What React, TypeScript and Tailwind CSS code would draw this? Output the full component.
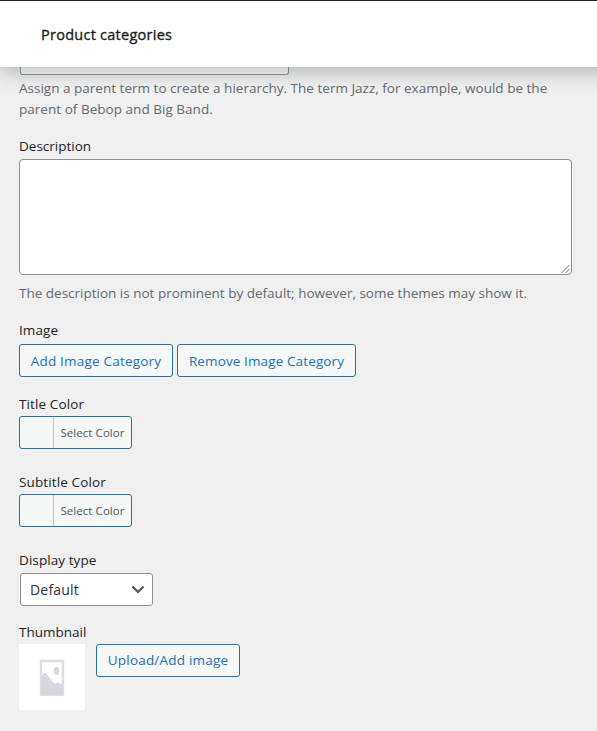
import type { ReactNode } from 'react';

function Label({ children, className = '' }: { children: ReactNode; className?: string }) {
  return <div className={`h-5 whitespace-nowrap text-[13.5px] leading-5 text-[#1d2327] ${className}`}>{children}</div>;
}

function Button({ children, className = '' }: { children: ReactNode; className?: string }) {
  return (
    <button
      className={`flex h-[33px] shrink-0 items-center justify-center whitespace-nowrap rounded-[3px] border border-[#2271b1] bg-[#f6f7f7] text-[13.5px] text-[#2271b1] ${className}`}
    >
      {children}
    </button>
  );
}

function ColorPicker() {
  return (
    <button className="flex h-[33px] w-[113px] overflow-hidden rounded-[3px] border border-[#2271b1] bg-[#f6f7f7]">
      <span className="h-full w-[33px]" />
      <span className="flex h-full flex-1 items-center justify-center whitespace-nowrap border-l border-[#c3c4c7] text-[11.5px] tracking-[0.06px] text-[#50575e]">
        Select Color
      </span>
    </button>
  );
}

export default function App() {
  return (
    <div className="h-[731px] w-[597px] overflow-hidden bg-[#f0f0f0] font-['Open_Sans','Noto_Sans',sans-serif]">
      <header className="relative z-10 flex h-[67px] w-[660px] items-center border-t border-[#1d2327] bg-white pl-[41px] shadow-[0_8px_16px_0_rgba(85,93,102,0.32)]">
        <h1 className="mt-px whitespace-nowrap text-[14.5px] font-medium leading-5 tracking-[0.26px] text-[#1e1e1e] [-webkit-text-stroke:0.35px_#1e1e1e]">
          Product categories
        </h1>
      </header>
      <main className="flex flex-col pl-[19px]">
        <div className="ml-px h-2 w-[269px] rounded-b-[3px] border border-t-0 border-[#8c8f94] bg-white" />
        <p className="mt-[3px] whitespace-nowrap text-[13.5px] leading-[21px] text-[#646970]">
          <span className="tracking-[0.012px]">Assign a parent term to create a hierarchy. The term Jazz, for example, would be the</span>
          <br />
          <span className="tracking-[0.03px]">parent of Bebop and Big Band.</span>
        </p>
        <Label className="mt-4">Description</Label>
        <div className="mt-[3px] flex h-[116px] w-[553px] items-end justify-end rounded-[4px] border border-[#8c8f94] bg-white">
          <svg width="11" height="11" viewBox="0 0 11 11" stroke="#50575e" strokeWidth="1" strokeDasharray="1.2 .2">
            <path d="M1.5 10L9.5 2M5.5 10L9.5 6" />
          </svg>
        </div>
        <p className="mt-2 h-[21px] whitespace-nowrap text-[13.5px] leading-[21px] text-[#646970]">
          The description is not prominent by default; however, some themes may show it.
        </p>
        <Label className="mt-4 tracking-[0.1px]">Image</Label>
        <div className="mt-1 flex gap-1">
          <Button className="w-[154px] pt-px tracking-[0.2px]">Add Image Category</Button>
          <Button className="w-[179px] pt-px tracking-[0.12px]">Remove Image Category</Button>
        </div>
        <Label className="mt-[17px] tracking-[0.12px]">Title Color</Label>
        <div className="mt-[2px]"><ColorPicker /></div>
        <Label className="mt-[23px] tracking-[0.12px]">Subtitle Color</Label>
        <div className="mt-[2px]"><ColorPicker /></div>
        <Label className="mt-[23px] tracking-[0.08px]">Display type</Label>
        <div className="ml-px mt-[3px] flex h-[33px] w-[133px] items-center justify-between rounded-[3px] border border-[#8c8f94] bg-white pl-[9px] pr-[7px] text-[14px] tracking-[0.2px] text-[#2c3338]">
          <span>Default</span>
          <svg width="14" height="9" viewBox="0 0 14 9" fill="none" stroke="#555" strokeWidth="2.1">
            <path d="M1.5 1.5L7 7L12.5 1.5" />
          </svg>
        </div>
        <Label className="mt-4">Thumbnail</Label>
        <div className="mt-[2px] flex gap-[11px]">
          <div className="flex h-[66px] w-[66px] items-center justify-center bg-white">
            <svg width="26" height="38" viewBox="0 0 26 38">
              <path d="M2 3H24V37H2Z" fill="#fff" stroke="#dcdde1" strokeWidth="2.4" />
              <path d="M2 19L5 15L7 15L12 22L16 26L19 24L21 26L24 25V37H2Z" fill="#d5d7dc" />
              <ellipse cx="17.5" cy="13" rx="2.7" ry="4" fill="#d5d7dc" />
            </svg>
          </div>
          <Button className="w-[144px] pb-px tracking-[0.2px]">Upload/Add image</Button>
        </div>
      </main>
    </div>
  );
}
